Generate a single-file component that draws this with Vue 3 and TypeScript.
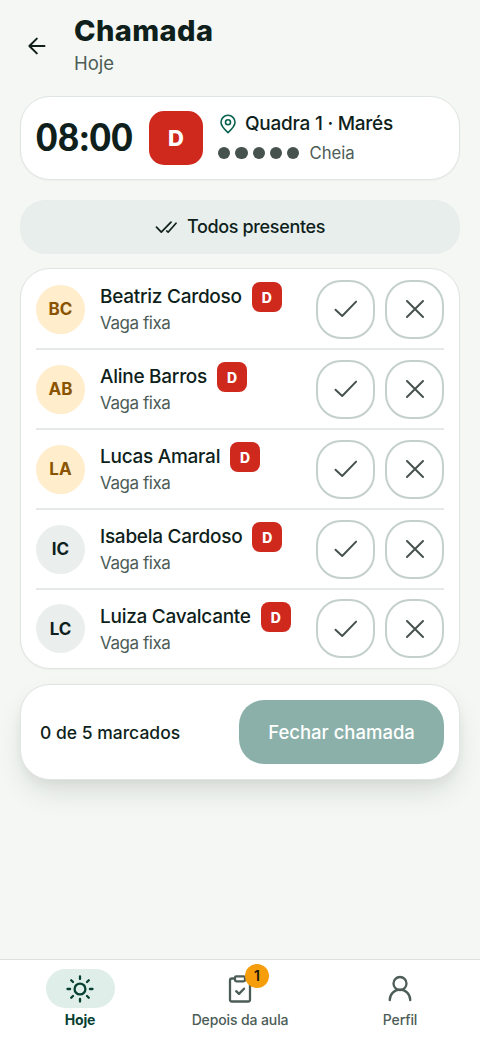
<script setup lang="ts">
interface Student {
  initials: string
  name: string
  highlighted: boolean
}

const students: Student[] = [
  { initials: 'BC', name: 'Beatriz Cardoso', highlighted: true },
  { initials: 'AB', name: 'Aline Barros', highlighted: true },
  { initials: 'LA', name: 'Lucas Amaral', highlighted: true },
  { initials: 'IC', name: 'Isabela Cardoso', highlighted: false },
  { initials: 'LC', name: 'Luiza Cavalcante', highlighted: false },
]
</script>

<template>
  <div class="screen">
    <header class="header">
      <button class="back" aria-label="Voltar">
        <svg width="18" height="18" viewBox="0 0 18 18"><path d="M16.500 9H1.500M8.800 1.600 1.400 9l7.400 7.400" /></svg>
      </button>
      <div>
        <h1 class="title">Chamada</h1>
        <p class="subtitle">Hoje</p>
      </div>
    </header>

    <main class="content">
      <section class="card lesson">
        <strong class="time">08:00</strong>
        <span class="level large">D</span>
        <div class="details">
          <div class="court">
            <svg class="pin" width="20" height="20" viewBox="0 0 20 20"><path d="M10 18.6C6.6 15.6 3 12 3 8.3a7 7 0 0 1 14 0c0 3.700-3.600 7.300-7 10.300Z" /><circle cx="10" cy="8.300" r="2.500" /></svg>
            <span class="court-name">Quadra 1 · Marés</span>
          </div>
          <div class="capacity">
            <i v-for="n in 5" :key="n" class="dot"></i>
            <span class="full">Cheia</span>
          </div>
        </div>
      </section>

      <button class="all">
        <svg width="22" height="14" viewBox="0 0 22 14"><path d="m1.500 7.200 4.800 4.900L16 2.200M11.800 11l1.300 1.200L21 3.200" /></svg>
        <span>Todos presentes</span>
      </button>

      <section class="card list">
        <div v-for="student in students" :key="student.initials" class="row">
          <span class="avatar" :class="{ warm: student.highlighted }">{{ student.initials }}</span>
          <div class="person">
            <div class="name-line"><span class="name">{{ student.name }}</span><span class="level">D</span></div>
            <p class="spot">Vaga fixa</p>
          </div>
          <div class="actions">
            <button class="mark" aria-label="Presente">
              <svg width="24" height="20" viewBox="0 0 24 20"><path d="m1.500 10.800 6.700 6.200L22.100 2.600" /></svg>
            </button>
            <button class="mark" aria-label="Ausente">
              <svg width="20" height="20" viewBox="0 0 20 20"><path d="m2 2 16 16M18 2 2 18" /></svg>
            </button>
          </div>
        </div>
      </section>

      <section class="card summary">
        <span class="count">0 de 5 marcados</span>
        <button class="close">Fechar chamada</button>
      </section>
    </main>

    <nav class="nav">
      <div class="tab active">
        <span class="tab-icon">
          <svg width="30" height="30" viewBox="0 0 30 30"><circle cx="15" cy="15" r="5.400" /><path d="M15 2.500v2.600M15 24.900v2.600M2.500 15h2.600M24.900 15h2.600M6.200 6.200l1.800 1.800M22 22l1.800 1.800M6.200 23.800 8 22M22 8l1.800-1.800" /></svg>
        </span>
        <span class="tab-label">Hoje</span>
      </div>
      <div class="tab">
        <span class="tab-icon">
          <svg width="30" height="30" viewBox="0 0 30 30"><path d="M10 4.500H7A2 2 0 0 0 5 6.500v19a2 2 0 0 0 2 2h16a2 2 0 0 0 2-2v-19a2 2 0 0 0-2-2h-3" /><rect x="10" y="2.300" width="10" height="5" rx="1.300" /><path d="m11.200 17.200 2.800 2.700 5-5.200" /></svg>
          <b class="badge">1</b>
        </span>
        <span class="tab-label">Depois da aula</span>
      </div>
      <div class="tab">
        <span class="tab-icon">
          <svg width="30" height="30" viewBox="0 0 30 30"><circle cx="15" cy="9.500" r="6.500" /><path d="M4.800 26.200v-.4a10.200 10.200 0 0 1 20.400 0v.4" /></svg>
        </span>
        <span class="tab-label">Perfil</span>
      </div>
    </nav>
  </div>
</template>

<style>
body {
  margin: 0;
}
</style>

<style scoped>
.screen {
  box-sizing: border-box;
  width: 480px;
  height: 1039px;
  display: flex;
  flex-direction: column;
  overflow: hidden;
  background: #f4f7f4;
  color: #0f1f1b;
  font-family: Inter, "Noto Sans", sans-serif;
}
.screen * {
  box-sizing: border-box;
}
h1, p {
  margin: 0;
}
button {
  border: 0;
  padding: 0;
  font: inherit;
  color: inherit;
  background: none;
  display: flex;
  align-items: center;
  justify-content: center;
}
svg {
  display: block;
  flex: none;
  fill: none;
  stroke: currentColor;
  stroke-width: 2;
  stroke-linecap: round;
  stroke-linejoin: round;
}
.header {
  height: 96px;
  padding: 14px 0 0 10px;
  display: flex;
}
.back {
  width: 54px;
  height: 63px;
  margin-right: 10px;
}
.title {
  font-size: 29px;
  line-height: 34px;
  font-weight: 800;
  letter-spacing: .400px;
}
.subtitle {
  margin-top: 3px;
  font-size: 18.500px;
  line-height: 24px;
  color: #4c5c57;
}
.content {
  flex: 1;
  padding: 0 20px;
}
.card {
  background: #fff;
  border: 1px solid #dfe5e2;
  border-radius: 30px;
  box-shadow: 0 1px 2px rgba(15, 31, 27, .04);
}
.lesson {
  height: 84px;
  display: flex;
  align-items: center;
  padding-left: 15px;
}
.time {
  width: 113px;
  font-family: Lato, "Noto Sans", sans-serif;
  font-size: 37px;
  line-height: 44px;
  padding-bottom: 3px;
  font-weight: 900;
  letter-spacing: .3px;
  white-space: nowrap;
}
.level {
  flex: none;
  width: 30px;
  height: 30px;
  border-radius: 8px;
  background: #cf291d;
  color: #fff;
  display: flex;
  align-items: center;
  justify-content: center;
  font-size: 14px;
  font-weight: 800;
}
.level.large {
  width: 54px;
  height: 54px;
  border-radius: 15px;
  font-size: 22px;
}
.details {
  margin-left: 15px;
}
.court, .capacity {
  display: flex;
  align-items: center;
}
.court {
  height: 30px;
  font-size: 19px;
  font-weight: 550;
  letter-spacing: -.25px;
}
.pin {
  color: #08604f;
  stroke-width: 1.6;
  margin-right: 7px;
}
.capacity {
  height: 29px;
  gap: 5px;
}
.dot {
  width: 12.300px;
  height: 12.300px;
  border-radius: 50%;
  background: #46524e;
}
.full {
  margin-left: 5px;
  font-size: 16.700px;
  color: #4c5c57;
}
.all {
  width: 440px;
  height: 54px;
  margin: 20px 0 14px;
  border-radius: 25px;
  background: #e8eeec;
  gap: 10px;
  font-size: 18px;
  font-weight: 550;
  letter-spacing: -.35px;
}
.all span {
  padding-bottom: 1px;
}
.all svg {
  stroke-width: 1.700;
}
.list {
  height: 401px;
  padding: 1px 15px 0;
}
.row {
  height: 80px;
  display: flex;
  align-items: center;
  border-bottom: 2px solid #e4e9e7;
}
.row:last-child {
  height: 79px;
  border-bottom-color: transparent;
}
.avatar {
  width: 49px;
  height: 49px;
  border-radius: 50%;
  background: #eaefed;
  display: flex;
  align-items: center;
  justify-content: center;
  font-size: 17px;
  font-weight: 700;
}
.avatar.warm {
  background: #ffedcc;
  color: #895300;
}
.person {
  flex: 1;
  margin-left: 15px;
  padding-bottom: 2px;
}
.row:last-child .person {
  padding-bottom: 1px;
}
.name-line {
  display: flex;
  align-items: center;
  gap: 10px;
  height: 30px;
}
.name {
  padding-bottom: 1px;
  font-size: 19px;
  font-weight: 550;
  letter-spacing: -.270px;
  white-space: nowrap;
}
.spot {
  font-size: 17px;
  line-height: 22px;
  letter-spacing: -.450px;
  color: #4c5c57;
}
.actions {
  display: flex;
  gap: 10px;
}
.mark {
  width: 59px;
  height: 59px;
  border: 2px solid #c4d0cc;
  border-radius: 25px;
  color: #46524e;
}
.summary {
  height: 96px;
  margin-top: 15px;
  padding: 0 15px 0 19px;
  display: flex;
  align-items: center;
  justify-content: space-between;
  box-shadow: 0 15px 30px -5px rgba(15, 31, 27, .12), 0 5px 10px rgba(15, 31, 27, .04);
}
.count {
  font-size: 17.500px;
  font-weight: 520;
}
.close {
  width: 205px;
  height: 64px;
  border-radius: 25px;
  background: #8ab0a9;
  color: #fff;
  font-size: 18.500px;
  font-weight: 550;
}
.nav {
  height: 80px;
  padding-top: 9px;
  background: #fff;
  border-top: 1px solid #dce2df;
  display: grid;
  grid-template-columns: repeat(3, 160px);
  color: #4c5c57;
}
.nav svg {
  stroke-width: 2.300;
}
.tab {
  display: flex;
  flex-direction: column;
  align-items: center;
}
.tab-icon {
  position: relative;
  width: 69px;
  height: 39px;
  border-radius: 20px;
  display: flex;
  align-items: center;
  justify-content: center;
}
.active {
  color: #073f32;
}
.active .tab-icon {
  background: #dfeee9;
}
.tab-label {
  margin-top: 2px;
  font-size: 14px;
  line-height: 20px;
  font-weight: 550;
  letter-spacing: -.120px;
}
.active .tab-label {
  font-weight: 650;
}
.badge {
  position: absolute;
  top: -5px;
  left: 39.500px;
  width: 24px;
  height: 24px;
  border-radius: 50%;
  background: #f69d0c;
  color: #181609;
  font-size: 14px;
  line-height: 24px;
  font-weight: 600;
  text-align: center;
}
</style>
